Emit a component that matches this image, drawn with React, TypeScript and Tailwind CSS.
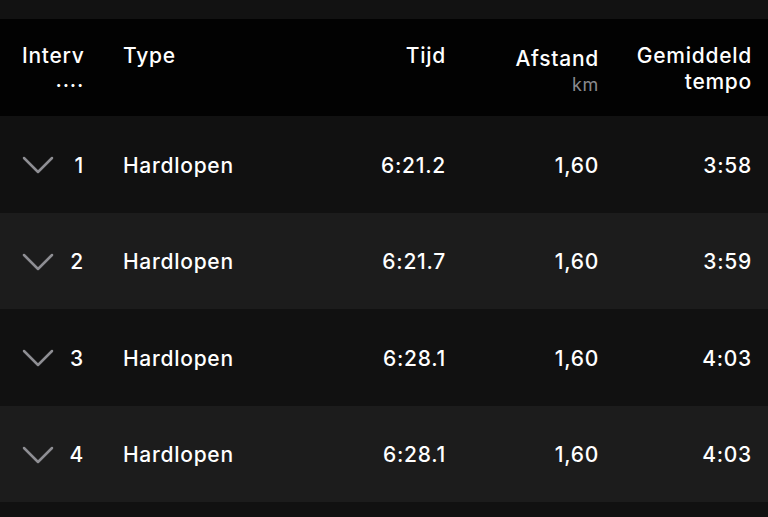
import React from 'react';

const rows = [
  { n: 1, type: 'Hardlopen', tijd: '6:21.2', afstand: '1,60', tempo: '3:58' },
  { n: 2, type: 'Hardlopen', tijd: '6:21.7', afstand: '1,60', tempo: '3:59' },
  { n: 3, type: 'Hardlopen', tijd: '6:28.1', afstand: '1,60', tempo: '4:03' },
  { n: 4, type: 'Hardlopen', tijd: '6:28.1', afstand: '1,60', tempo: '4:03' },
];

const grid = 'grid grid-cols-[62px_39px_170px_153px_153px_153px] pl-[22px] pr-[16px]';

function Chevron() {
  return (
    <svg width="32" height="20" viewBox="0 0 32 20" fill="none" className="shrink-0">
      <polyline points="2,3 16,17 30,3" stroke="#8e8e93" strokeWidth="2.5" strokeLinecap="round" strokeLinejoin="round" />
    </svg>
  );
}

export default function App() {
  return (
    <div className="w-[768px] h-[517px] overflow-hidden bg-[#111111] text-white font-['Inter','Liberation_Sans',sans-serif] text-[21px] font-medium tracking-[0.035em]">
      <div className="h-[19px] bg-[#121212]" />

      {/* header */}
      <div className={`${grid} h-[97px] bg-[#020202] items-start pt-[24px] leading-[26px]`}>
        <div className="flex flex-col items-end">
          <span className="self-start">Interv</span>
          <span className="leading-[22px]">....</span>
        </div>
        <div />
        <div>Type</div>
        <div className="text-right">Tijd</div>
        <div className="flex flex-col items-end pt-[3px]">
          <span>Afstand</span>
          <span className="text-[18px] font-normal text-[#8a8a8e]">km</span>
        </div>
        <div className="flex flex-col items-end">
          <span>Gemiddeld</span>
          <span>tempo</span>
        </div>
      </div>

      {rows.map((r, i) => (
        <div
          key={r.n}
          className={`${grid} h-[96.5px] items-center pt-[2px] ${i % 2 === 0 ? 'bg-[#111111]' : 'bg-[#1c1c1c]'}`}
        >
          <div className="flex items-center justify-between">
            <Chevron />
            <span>{r.n}</span>
          </div>
          <div />
          <div>{r.type}</div>
          <div className="text-right">{r.tijd}</div>
          <div className="text-right">{r.afstand}</div>
          <div className="text-right">{r.tempo}</div>
        </div>
      ))}
    </div>
  );
}
